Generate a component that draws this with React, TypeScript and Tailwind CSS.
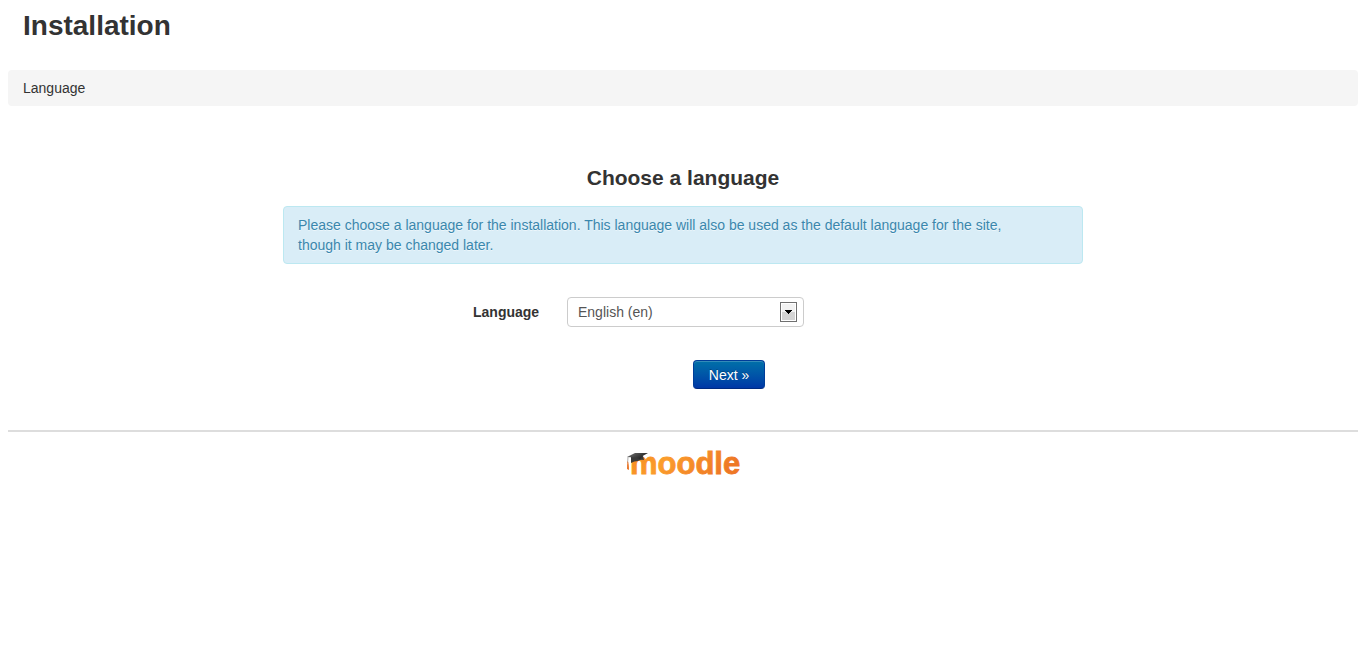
import React from "react";

function MoodleLogo() {
  return (
    <svg width="118" height="34" viewBox="0 0 118 34" overflow="visible" role="img" aria-label="Moodle">
      <defs>
        <linearGradient id="orange" x1="0" y1="0" x2="1" y2="0.3">
          <stop offset="0" stopColor="#f4851f" />
          <stop offset="0.4" stopColor="#fb9d2c" />
          <stop offset="1" stopColor="#ee7725" />
        </linearGradient>
        <linearGradient id="cap" x1="0" y1="0" x2="1" y2="0.5">
          <stop offset="0" stopColor="#777" />
          <stop offset="1" stopColor="#1c1c1c" />
        </linearGradient>
      </defs>
      <text
        x="6"
        y="28"
        fontSize="31"
        fontWeight="700"
        fill="url(#orange)"
        stroke="url(#orange)"
        strokeWidth="0.8"
        fontFamily="'Liberation Sans', Arial, sans-serif"
      >
        moodle
      </text>
      <path d="M7 11 L19 10 L20 14 Q17 13 14 15 Q10 15 7 17 Z" fill="#3a3a3a" />
      <path d="M3 11 Q7 9 11 7 L24 7 Q19 9 16 13 Q11 11 3 11 Z" fill="url(#cap)" />
      <path d="M4 11 L3.6 17" stroke="#888" strokeWidth="0.7" />
      <path d="M3.6 15 Q5 17 5 24 L3 23 Q3 18 3.6 15 Z" fill="#e9772b" />
    </svg>
  );
}

export default function App() {
  return (
    <div className="px-2 font-['Liberation_Sans',Arial,sans-serif] text-sm leading-5 text-[#333]">
      <header>
        <h1 className="px-[15px] pt-[6px] text-[28px] leading-10 font-bold">Installation</h1>
        <nav aria-label="Breadcrumb" className="mt-6 rounded bg-[#f5f5f5] px-[15px] py-2">
          Language
        </nav>
      </header>
      <main className="mx-auto max-w-[800px] pt-[52px]">
        <h2 className="text-center text-[21px] leading-10 font-bold">Choose a language</h2>
        <p className="mt-2 rounded border border-[#bce8f1] bg-[#d9edf7] py-2 pr-[35px] pl-[14px] text-[#3a87ad] [text-shadow:0_1px_0_rgba(255,255,255,0.5)]">
          Please choose a language for the installation. This language will also be used as the default language for the
          site, though it may be changed later.
        </p>
        <form className="mt-[33px]" onSubmit={(e) => e.preventDefault()}>
          <div className="flex items-center pl-[190px]">
            <label htmlFor="language" className="w-[94px] font-bold">
              Language
            </label>
            <div className="relative w-[237px]">
              <select
                id="language"
                defaultValue="en"
                className="block h-[30px] w-full appearance-none rounded border border-[#ccc] bg-white px-[10px] text-sm text-[#555]"
              >
                <option value="en">English (en)</option>
              </select>
              <span className="pointer-events-none absolute top-[5px] right-[7px] flex h-5 w-[17px] items-center justify-center border border-[#707070] bg-linear-to-b from-[#f2f2f2] from-50% to-[#d4d4d4] to-50% inset-ring inset-ring-white">
                <svg width="7" height="4" viewBox="0 0 7 4" shapeRendering="crispEdges">
                  <path d="M0 0H7V1H6V2H5V3H4V4H3V3H2V2H1V1H0Z" fill="#000" />
                </svg>
              </span>
            </div>
          </div>
          <div className="mt-[33px] pl-[410px]">
            <button
              type="submit"
              className="block h-[29px] w-[72px] rounded border border-[#003d99] border-b-[#002a80] bg-linear-to-b from-[#0070a8] to-[#0037a6] text-sm text-white inset-shadow-[0_1px_0_rgba(255,255,255,0.2)] [text-shadow:0_-1px_0_rgba(0,0,0,0.25)]"
            >
              Next »
            </button>
          </div>
        </form>
      </main>
      <footer className="mt-[41px] flex justify-center border-t-2 border-[#ddd] pt-[14px]">
        <a href="https://moodle.org">
          <MoodleLogo />
        </a>
      </footer>
    </div>
  );
}
